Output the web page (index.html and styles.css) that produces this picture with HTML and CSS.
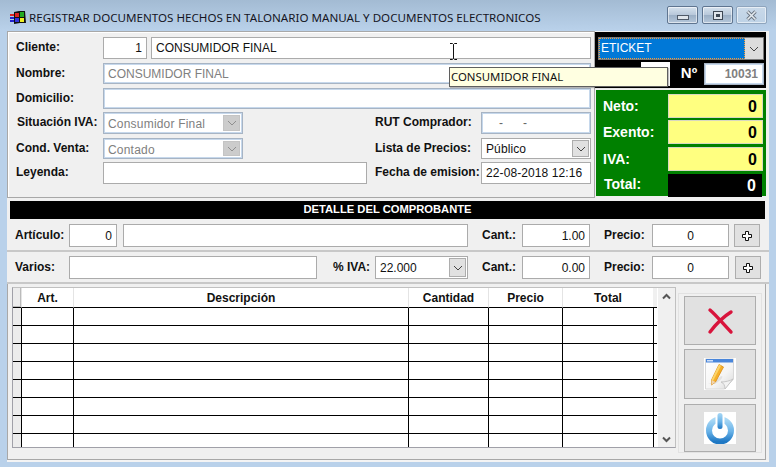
FILE: index.html
```html
<!DOCTYPE html>
<html lang="es">
<head>
<meta charset="utf-8">
<title>Registrar documentos</title>
<link rel="stylesheet" href="styles.css">
</head>
<body>
<div class="window">
  <header class="titlebar">
    <svg class="app-icon" width="17" height="16" viewBox="0 0 17 16">
      <rect x="1" y="5" width="4" height="2" fill="#d22"/><rect x="1" y="8" width="4" height="2" fill="#22c"/><rect x="1" y="11" width="4" height="2" fill="#22c"/>
      <path d="M5 3l5-1 6 0 1 12-6 0-6 1z" fill="#111"/>
      <rect x="6" y="4" width="4" height="4" fill="#d22"/><rect x="11" y="3" width="4" height="5" fill="#2a2"/><rect x="6" y="9" width="4" height="4" fill="#33d"/><rect x="11" y="9" width="4" height="4" fill="#ee2"/>
    </svg>
    <span class="title">REGISTRAR DOCUMENTOS HECHOS EN TALONARIO MANUAL Y DOCUMENTOS ELECTRONICOS</span>
    <div class="caption">
      <div class="capbtn"><span class="glyph-min"></span></div>
      <div class="capbtn cap2"><span class="glyph-max"></span></div>
      <div class="capbtn capclose"><svg width="13" height="11" viewBox="0 0 13 11"><path d="M2.500 1.500l8 8M10.500 1.500l-8 8" stroke="#6a7480" stroke-width="3.400"/><path d="M2.500 1.500l8 8M10.500 1.500l-8 8" stroke="#e4eaf0" stroke-width="1.600"/></svg></div>
    </div>
  </header>

  <main class="client">
    <section class="top">
      <div class="panel form">
        <div class="row r1"><label class="lbl">Cliente:</label><div class="inp code right">1</div><div class="inp name">CONSUMIDOR FINAL</div></div>
        <div class="row r2"><label class="lbl">Nombre:</label><div class="inp blue full muted">CONSUMIDOR FINAL</div></div>
        <div class="row r3"><label class="lbl">Domicilio:</label><div class="inp blue full"></div></div>
        <div class="row r4"><label class="lbl ind">Situación IVA:</label><div class="inp blue sel dis muted">Consumidor Final<span class="arrow"><svg width="10" height="6" viewBox="0 0 10 6"><path d="M1 1l4 4 4-4" fill="none" stroke="#8f8f8f"/></svg></span></div>
          <div class="pair"><label class="lbl wide">RUT Comprador:</label><div class="inp blue small rut">-&nbsp;&nbsp;&nbsp;&nbsp;&nbsp;&nbsp;-</div></div></div>
        <div class="row r5"><label class="lbl">Cond. Venta:</label><div class="inp blue sel dis muted">Contado<span class="arrow"><svg width="10" height="6" viewBox="0 0 10 6"><path d="M1 1l4 4 4-4" fill="none" stroke="#8f8f8f"/></svg></span></div>
          <div class="pair"><label class="lbl wide">Lista de Precios:</label><div class="inp small sel2">Público<span class="arrow"><svg width="10" height="6" viewBox="0 0 10 6"><path d="M1 1l4 4 4-4" fill="none" stroke="#444"/></svg></span></div></div></div>
        <div class="row r6"><label class="lbl">Leyenda:</label><div class="inp leyenda"></div>
          <div class="pair"><label class="lbl wide">Fecha de emision:</label><div class="inp small">22-08-2018 12:16</div></div></div>
      </div>
      <div class="side">
        <div class="black">
          <div class="doc-select"><span class="doc-value">ETICKET</span><span class="doc-arrow"><svg width="10" height="6" viewBox="0 0 10 6"><path d="M1 1l4 4 4-4" fill="none" stroke="#444"/></svg></span></div>
          <div class="doc-row"><div class="serie"></div><span class="no">Nº</span><div class="inp blue number">10031</div></div>
        </div>
        <div class="green">
          <div class="tot"><span>Neto:</span><b class="val">0</b></div>
          <div class="tot"><span>Exento:</span><b class="val">0</b></div>
          <div class="tot"><span>IVA:</span><b class="val">0</b></div>
          <div class="tot tot-last"><span>Total:</span><b class="val dark">0</b></div>
        </div>
      </div>
    </section>

    <div class="bar">DETALLE DEL COMPROBANTE</div>

    <section class="line l1">
      <label class="lbl w-a">Artículo:</label><div class="inp w-code right">0</div><div class="inp w-desc"></div>
      <label class="lbl w-c">Cant.:</label><div class="inp w-cant right">1.00</div>
      <label class="lbl w-p">Precio:</label><div class="inp w-prec center">0</div>
      <div class="plus"><svg width="10" height="10" viewBox="0 0 10 10"><path d="M3.500.5h3v3h3v3h-3v3h-3v-3h-3v-3h3z" fill="#fff" stroke="#111"/></svg></div>
    </section>
    <section class="line l2">
      <label class="lbl w-a">Varios:</label><div class="inp w-varios"></div>
      <label class="lbl w-iva">% IVA:</label><div class="inp w-sel sel2">22.000<span class="arrow"><svg width="10" height="6" viewBox="0 0 10 6"><path d="M1 1l4 4 4-4" fill="none" stroke="#444"/></svg></span></div>
      <label class="lbl w-c">Cant.:</label><div class="inp w-cant right">0.00</div>
      <label class="lbl w-p">Precio:</label><div class="inp w-prec center">0</div>
      <div class="plus"><svg width="10" height="10" viewBox="0 0 10 10"><path d="M3.500.5h3v3h3v3h-3v3h-3v-3h-3v-3h3z" fill="#fff" stroke="#111"/></svg></div>
    </section>

    <section class="panel bottom">
      <div class="gridbox">
        <div class="gridwrap">
          <table class="grid">
            <colgroup><col class="c0"><col class="c1"><col class="c2"><col class="c3"><col class="c4"><col class="c5"><col class="c6"></colgroup>
            <thead><tr><th class="rh"></th><th>Art.</th><th>Descripción</th><th>Cantidad</th><th>Precio</th><th>Total</th><th class="end"></th></tr></thead>
            <tbody>
              <tr><td class="rh"></td><td></td><td></td><td></td><td></td><td></td><td class="end"></td></tr>
              <tr><td class="rh"></td><td></td><td></td><td></td><td></td><td></td><td class="end"></td></tr>
              <tr><td class="rh"></td><td></td><td></td><td></td><td></td><td></td><td class="end"></td></tr>
              <tr><td class="rh"></td><td></td><td></td><td></td><td></td><td></td><td class="end"></td></tr>
              <tr><td class="rh"></td><td></td><td></td><td></td><td></td><td></td><td class="end"></td></tr>
              <tr><td class="rh"></td><td></td><td></td><td></td><td></td><td></td><td class="end"></td></tr>
              <tr><td class="rh"></td><td></td><td></td><td></td><td></td><td></td><td class="end"></td></tr>
              <tr><td class="rh"></td><td></td><td></td><td></td><td></td><td></td><td class="end"></td></tr>
            </tbody>
          </table>
        </div>
        <div class="scroll">
          <svg width="9" height="7" viewBox="0 0 9 7"><path d="M1 5.500l3.500-3.500 3.500 3.500" fill="none" stroke="#555" stroke-width="2"/></svg>
          <svg width="9" height="7" viewBox="0 0 9 7"><path d="M1 1.500l3.500 3.500 3.500-3.500" fill="none" stroke="#555" stroke-width="2"/></svg>
        </div>
      </div>
      <div class="actions">
        <div class="act a1"><svg width="28" height="28" viewBox="0 0 28 28"><path d="M4 3c7 6 14 15 21 22" fill="none" stroke="#d8143c" stroke-width="3.400" stroke-linecap="round"/><path d="M25 5C17 10 10 17 4 25" fill="none" stroke="#d8143c" stroke-width="3.400" stroke-linecap="round"/></svg></div>
        <div class="act a2"><svg width="32" height="32" viewBox="0 0 32 32">
          <defs><linearGradient id="pg" x1="0" y1="0" x2="1" y2="1"><stop offset="0" stop-color="#fff"/><stop offset=".6" stop-color="#f4f4f4"/><stop offset="1" stop-color="#d8d8d8"/></linearGradient></defs>
          <rect x="0" y="0" width="32" height="32" fill="#fff"/>
          <path d="M1.500 1h28v20l-9 10h-19z" fill="url(#pg)" stroke="#d8d8d8"/>
          <rect x="2" y="1" width="27" height="3.500" fill="#4a86da"/>
          <rect x="3" y="2" width="6" height="1.500" fill="#cfe0f7"/>
          <path d="M21 31c0-3-1-6-4-7 4 0 9-1 12-3z" fill="#f2f2f2" stroke="#bdbdbd" stroke-width=".8"/>
          <path d="M4 26c6-1 10-7 14-8 2 2-4 6-7 8z" fill="#e2e2e2"/>
          <path d="M15 6.500l4.500 2.500-8 15-4 3 0-5z" fill="#f6b02a" stroke="#d88a14" stroke-width=".8"/>
          <path d="M15 6.500l2 1.200-8 15.300-1.500-1z" fill="#fbd46a"/>
          <path d="M7.500 22l4 2-4 3z" fill="#f0d5b0"/>
        </svg></div>
        <div class="act a3"><svg width="32" height="32" viewBox="0 0 32 32">
          <defs><linearGradient id="pw" x1="0" y1="0" x2="0" y2="1"><stop offset="0" stop-color="#a9d8f5"/><stop offset=".55" stop-color="#68b2e8"/><stop offset="1" stop-color="#1f78c4"/></linearGradient></defs>
          <rect x="0" y="0" width="32" height="32" fill="#fff"/>
          <circle cx="16" cy="18.500" r="11" fill="none" stroke="url(#pw)" stroke-width="6"/>
          <rect x="11.500" y="0" width="9" height="15" fill="#fff"/>
          <rect x="13.500" y="1" width="5" height="16" rx="2.500" fill="url(#pw)"/>
        </svg></div>
      </div>
    </section>
  </main>

  <div class="tooltip">CONSUMIDOR FINAL</div>
  <svg class="ibeam" width="9" height="17" viewBox="0 0 9 17"><path d="M1 .5h2.500l1 1 1-1H8M4.500 1.500v14M1 16.500h2.500l1-1 1 1H8" fill="none" stroke="#111"/></svg>
</div>
</body>
</html>
```

FILE: styles.css
```css
* { box-sizing: border-box; }
html, body { margin: 0; padding: 0; }
body { width: 776px; height: 467px; overflow: hidden; font-family: "Liberation Sans", Arial, sans-serif; font-size: 12px; color: #111; }

.window { position: relative; width: 776px; height: 467px; padding-bottom: 5px; background: linear-gradient(#a3bbd3 0, #b9d1ea 30px); display: flex; flex-direction: column; }

.titlebar { height: 31px; display: flex; align-items: center; padding: 3px 9px 0 9px; flex: none; }
.app-icon { flex: none; margin-right: 3px; }
.title { font-family: "Noto Sans", sans-serif; font-size: 11.600px; color: #15151f; white-space: nowrap; }
.caption { margin-left: auto; display: flex; gap: 3px; margin-top: -4px; }
.capbtn { width: 31px; height: 18px; border: 1px solid #5f7590; border-radius: 2px; background: linear-gradient(#d6e2ee 0, #b7c7d9 50%, #9bafc5 51%, #b5c7da 100%); box-shadow: inset 0 0 0 1px rgba(255,255,255,.55); display: flex; align-items: center; justify-content: center; }
.cap2 { margin-left: 1px; }
.capclose { background: linear-gradient(#c9d9e9, #bed2e6); border-color: #8fa5bd; }
.glyph-min { width: 12px; height: 5px; margin-top: 4px; background: #dfe5eb; border: 1px solid #4f5a68; }
.glyph-max { width: 10px; height: 9px; border: 1px solid #3d4754; background: #3d4754; box-shadow: inset 0 0 0 2px #dfe5eb; }

.client { width: 762px; height: 431px; margin-left: 7px; background: #f0f0f0; flex: none; border-bottom: 2px solid #f4f4f4; }
.panel { border: 1px solid #a8a8a8; box-shadow: inset 1px 1px 0 #fff; }

.top { display: flex; height: 167px; }
.form { width: 588px; padding: 5px 0 0 8px; }
.row { display: flex; align-items: flex-start; }
.r1 { height: 26px; } .r2 { height: 25px; } .r3 { height: 24px; } .r4 { height: 26px; } .r5 { height: 24px; } .r6 { height: 22px; }
.r1 .inp, .r4 .inp, .r6 .inp { height: 22px; }
.r2 .inp, .r3 .inp, .r5 .inp { height: 21px; }

.lbl { font-weight: 700; font-size: 12px; line-height: 20px; white-space: nowrap; color: #111; }
.row > .lbl { width: 87px; flex: none; }
.row > .ind { padding-left: 1px; }
.pair { margin-left: auto; width: 216px; margin-right: 3px; display: flex; }
.wide { width: 106px; flex: none; }

.inp { background: #fff; border: 1px solid #ababab; padding: 0 4px; line-height: 20px; font-size: 12px; color: #111; white-space: nowrap; position: relative; flex: none; overflow: hidden; }
.right { text-align: right; }
.center { text-align: center; }
.muted { color: #808080; }
.blue { border-color: #a7b4c4; box-shadow: inset 0 0 0 1px #c6d8ec; }
.code { width: 44px; }
.name { width: 440px; margin-left: 4px; }
.full { width: 488px; }
.sel { width: 140px; }
.leyenda { width: 264px; }
.small { width: 110px; letter-spacing: .1px; }
.rut { text-align: left; color: #666; padding-left: 17px; letter-spacing: 0; }
.arrow { position: absolute; right: 1px; top: 1px; bottom: 1px; width: 17px; background: #e1e1e1; border: 1px solid #adadad; display: flex; align-items: center; justify-content: center; }
.dis .arrow { background: #cccccc; border-color: #c4c4c4; right: 2px; top: 2px; bottom: 2px; }
.dis { padding-top: 1px; letter-spacing: .2px; }

.side { width: 172px; padding: 1px 1px 0 0; display: flex; flex-direction: column; }
.black { height: 56px; background: #000; padding: 5px 2px 0 3px; flex: none; }
.doc-select { height: 23px; background: #fff; border: 1px solid #7a7a7a; display: flex; }
.doc-value { flex: 1; background: #0078d7; color: #fff; outline: 1px dotted #f5a040; outline-offset: -1px; font-size: 12px; line-height: 20px; padding-left: 2px; }
.doc-arrow { width: 18px; background: #dcdcdc; display: flex; align-items: center; justify-content: center; }
.doc-row { display: flex; margin-top: 2px; align-items: flex-start; padding-left: 43px; }
.serie { width: 29px; height: 24px; background: #fff; }
.no { color: #fff; font-weight: 700; font-size: 15px; width: 34px; padding-left: 4px; text-align: center; line-height: 22px; }
.number { width: 60px; height: 22px; margin-top: 1px; text-align: right; color: #808080; font-weight: 700; line-height: 20px; padding-right: 5px; }

.green { margin: 2px 0 0 1px; height: 106px; width: 170px; background: #008000; padding: 4px 3px 1px 7px; display: flex; flex-direction: column; gap: 2px; }
.tot { display: flex; justify-content: space-between; align-items: center; color: #fff; font-weight: 700; font-size: 14px; height: 24px; flex: none; }
.tot:nth-child(3) { margin-top: 1px; }
.tot-last { margin-top: 1px; height: 23px; }
.tot-last span { padding: 0 0 4px 1px; }
.val { width: 95px; height: 100%; background: #ffff80; border: 1px solid #d8d8c0; color: #000; font-size: 16px; text-align: right; padding-right: 5px; line-height: 23px; }
.dark { background: #000; color: #fff; width: 94px; margin-right: 1px; border-color: #000; line-height: 21px; }

.bar { height: 18px; margin: 3px 4px 0 3px; background: #000; color: #fff; font-weight: 700; font-size: 11.200px; line-height: 17px; text-align: center; }

.line { display: flex; align-items: flex-start; padding-left: 9px; border-bottom: 2px solid #c8c8c8; }
.l1 { height: 33px; padding-top: 5px; }
.l2 { height: 32px; padding-top: 4px; }
.line .inp { height: 23px; line-height: 22px; }
.line .lbl { flex: none; margin-top: 1px; }
.w-a { width: 54px; margin-left: -1px; }
.w-code { width: 48px; }
.w-desc { width: 345px; margin-left: 6px; }
.w-c { width: 40px; margin-left: 14px; }
.w-cant { width: 68px; }
.w-p { width: 48px; margin-left: 14px; }
.w-prec { width: 77px; }
.w-varios { width: 248px; }
.w-iva { width: 42px; margin-left: 16px; }
.w-sel { width: 93px; }
.plus { width: 26px; height: 23px; margin-left: 5px; background: #e1e1e1; border: 1px solid #adadad; display: flex; align-items: center; justify-content: center; flex: none; }
.l2 .plus { margin-left: 6px; }

.bottom { height: 176px; margin-right: 3px; padding: 3px 0 0 4px; display: flex; align-items: flex-start; border-width: 0 1px 1px 1px; box-shadow: none; }
.gridbox { width: 664px; height: 161px; display: flex; border: 1px solid #c0c0c0; border-bottom-color: #a0a0a8; border-left-color: #a0a0a8; background: #f0f0f0; flex: none; }
.gridwrap { width: 644px; height: 159px; overflow: hidden; background: #fff; flex: none; }
.grid { width: 644px; table-layout: fixed; border-collapse: separate; border-spacing: 0; }
.c0 { width: 8px; } .c1 { width: 52px; } .c2 { width: 335px; } .c3 { width: 80px; } .c4 { width: 74px; } .c5 { width: 91px; } .c6 { width: 4px; }
.grid th { height: 20px; padding: 0; background: #fff; border-bottom: 1px solid #000; border-left: 1px solid #e4e4e4; font-size: 12px; font-weight: 700; color: #111; line-height: 18px; }
.grid td { height: 18px; padding: 0; border-bottom: 1px solid #000; border-left: 1px solid #000; background: #fff; }
.grid .rh { background: #ececec; border-left: 0; }
.grid th.rh { box-shadow: inset -1px -1px 0 #bbb; }
.grid th.end { background: #f0f0f0; border-left: 0; }
.scroll { width: 18px; height: 159px; background: #f0f0f0; border-left: 1px solid #fff; display: flex; flex-direction: column; align-items: center; justify-content: space-between; padding: 5px 0 4px; }

.actions { width: 84px; height: 160px; margin: 6px 0 0 2px; border: 1px solid #e2e2e2; padding: 2px 5px 0; display: flex; flex-direction: column; gap: 4px; flex: none; }
.act { width: 72px; background: #e1e1e1; border: 1px solid #adadad; display: flex; align-items: center; justify-content: center; flex: none; }
.a1 { height: 49px; } .a2 { height: 50px; } .a3 { height: 48px; margin-top: 1px; }

.tooltip { position: absolute; left: 449px; top: 67px; width: 219px; height: 20px; background: #ffffe1; border: 1px solid #5f5f5f; box-shadow: 1px 1px 1px rgba(0,0,0,.25); font-family: "Noto Sans", sans-serif; font-size: 11.400px; line-height: 17px; padding-left: 1px; color: #111; }
.ibeam { position: absolute; left: 449px; top: 43px; }
```
